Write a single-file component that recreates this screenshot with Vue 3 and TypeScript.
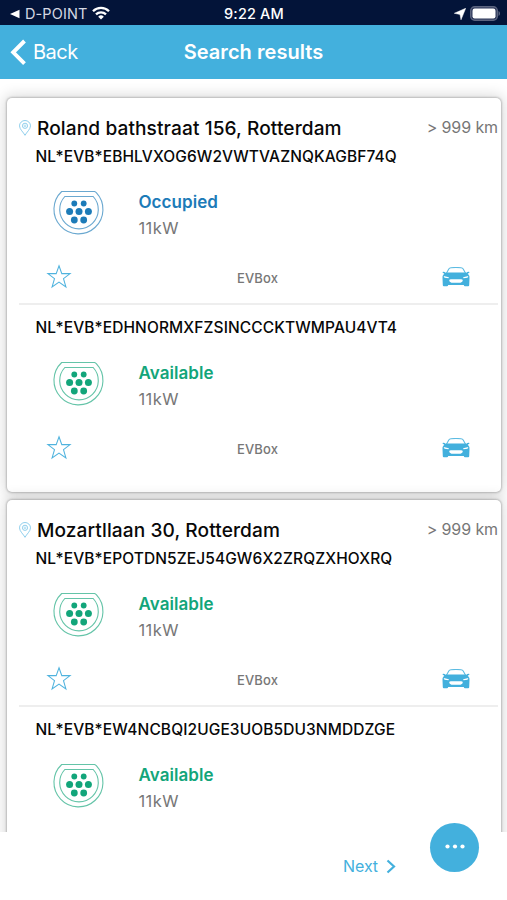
<script setup lang="ts">
interface Connector {
  id: string
  status: 'Occupied' | 'Available'
  power: string
  operator?: string
}

interface Location {
  address: string
  distance: string
  connectors: Connector[]
}

const locations: Location[] = [
  {
    address: 'Roland bathstraat 156, Rotterdam',
    distance: '> 999 km',
    connectors: [
      { id: 'NL*EVB*EBHLVXOG6W2VWTVAZNQKAGBF74Q', status: 'Occupied', power: '11kW', operator: 'EVBox' },
      { id: 'NL*EVB*EDHNORMXFZSINCCCKTWMPAU4VT4', status: 'Available', power: '11kW', operator: 'EVBox' },
    ],
  },
  {
    address: 'Mozartllaan 30, Rotterdam',
    distance: '> 999 km',
    connectors: [
      { id: 'NL*EVB*EPOTDN5ZEJ54GW6X2ZRQZXHOXRQ', status: 'Available', power: '11kW', operator: 'EVBox' },
      { id: 'NL*EVB*EW4NCBQI2UGE3UOB5DU3NMDDZGE', status: 'Available', power: '11kW' },
    ],
  },
]
</script>

<template>
  <div class="screen">
    <div class="statusbar">
      <div class="status-left">
        <svg class="return" width="10" height="10" viewBox="0 0 10 10"><path d="M0 5 9.5 .8v8.4z" fill="#fff" /></svg>
        <span class="carrier">D-POINT</span>
        <svg class="wifi" width="18" height="14" viewBox="0 0 18 14">
          <g fill="none" stroke="#fff" stroke-width="2.3">
            <path d="M1 5.2a11.3 11.3 0 0 1 16 0" />
            <path d="M4 8.4a7.1 7.1 0 0 1 10 0" />
          </g>
          <path d="M6.2 10.7a4 4 0 0 1 5.6 0L9 13.5z" fill="#fff" />
        </svg>
      </div>
      <span class="clock">9:22 AM</span>
      <div class="status-right">
        <svg width="12" height="12" viewBox="0 0 12 12"><path d="M11.7.3 7 11.8 6 6.4.3 5.3z" fill="#fff" stroke="#fff" stroke-width=".5" stroke-linejoin="round" /></svg>
        <svg width="31" height="15" viewBox="0 0 31 15">
          <rect x=".7" y=".7" width="26.6" height="13.6" rx="4" fill="#2b3658" stroke="#5c6580" stroke-width="1.4" />
          <rect x="2.5" y="2.5" width="23" height="10" rx="2.2" fill="#fff" />
          <path d="M28.5 5c2 .7 2 4.3 0 5z" fill="#5c6580" />
        </svg>
      </div>
    </div>

    <header class="navbar">
      <button class="back">
        <svg width="17" height="27" viewBox="0 0 17 27"><path d="M14.5 2 3.2 13.3 14.5 24.6" fill="none" stroke="#fff" stroke-width="3.9" /></svg>
        <span>Back</span>
      </button>
      <h1>Search results</h1>
      <span></span>
    </header>

    <main class="results">
      <article v-for="location in locations" :key="location.address" class="card">
        <div class="location">
          <svg class="pin" width="12" height="16" viewBox="0 0 12 16" fill="none" stroke="#83caea" stroke-width=".9">
            <path d="M6 15.3C4.6 12.5.5 9.2.5 5.9a5.5 5.4 0 0 1 11 0C11.5 9.2 7.4 12.5 6 15.3z" />
            <circle cx="6" cy="5.8" r="2.6" />
            <circle cx="6" cy="5.8" r=".9" stroke-width=".6" />
          </svg>
          <h2>{{ location.address }}</h2>
          <span class="distance">{{ location.distance }}</span>
        </div>

        <section v-for="connector in location.connectors" :key="connector.id" class="connector">
          <div class="code">{{ connector.id }}</div>
          <div class="details" :class="connector.status.toLowerCase()">
            <svg class="plug" width="52" height="46" viewBox="0 0 52 46">
              <g fill="none" stroke="currentColor" stroke-width="1.1" opacity=".65">
                <path d="M8.7 1.5H41.8L43.3 2.6A24.5 24.5 0 1 1 8.7 1.5Z" />
                <path d="M11.8 6.5H40.2A19.3 19.3 0 1 1 11.8 6.5Z" />
              </g>
              <g fill="currentColor">
                <circle cx="21.3" cy="13.5" r="2.9" />
                <circle cx="30.7" cy="13.5" r="2.9" />
                <circle cx="16.6" cy="21.5" r="3.5" />
                <circle cx="26" cy="21.5" r="3.5" />
                <circle cx="35.4" cy="21.5" r="3.5" />
                <circle cx="21.3" cy="30" r="3.4" />
                <circle cx="30.7" cy="30" r="3.4" />
              </g>
            </svg>
            <div>
              <div class="state">{{ connector.status }}</div>
              <div class="power">{{ connector.power }}</div>
            </div>
          </div>
          <div v-if="connector.operator" class="actions">
            <svg class="star" width="26" height="25" viewBox="0 0 26 25">
              <path d="M13 1.8 15.8 9.6H24.1L17.5 14.7 19.9 22.9 13 18.1 6.1 22.9 8.5 14.7 1.9 9.6H10.2Z" fill="none" stroke="#4fb3de" stroke-width="1.05" />
            </svg>
            <span class="operator">{{ connector.operator }}</span>
            <svg class="car" width="28" height="20" viewBox="0 0 28 20">
              <path d="M4.3 6.5 6.8 2.1Q7.4 1 9 .8 14 .2 19 .8q1.6.2 2.2 1.3L23.7 6.5" fill="none" stroke="#5bbbe2" stroke-width="1.1" />
              <path d="M.5 5.1Q2 4.3 3.7 5.7L5 5.5H23L24.3 5.7Q26 4.3 27.5 5.1 27.5 6.3 25.7 6.6 27.6 8.5 27.5 11L27.2 18.2q-.1 1-1 1H23q-1 0-1.2-1.2H6.2Q6 19.2 5 19.2H1.8q-.9 0-1-1L.5 11Q.4 8.5 2.3 6.6.5 6.3.5 5.1Z" fill="#43b0dd" />
              <path d="M1.6 9 6.9 10.3 6.5 11.2 2.5 10.7zM26.4 9 21.1 10.3 21.5 11.2 25.5 10.7zM9 12.2h10q1.8 0 1.8 1.4t-2.3 2.2H9.5q-2.3-.8-2.3-2.2T9 12.2" fill="#fff" />
            </svg>
          </div>
        </section>
      </article>
    </main>

    <footer class="pager">
      <a class="next">
        <span>Next</span>
        <svg width="10" height="15" viewBox="0 0 10 15"><path d="M1.5 1.5 8 7.5 1.5 13.5" fill="none" stroke="#43b0dd" stroke-width="2.2" /></svg>
      </a>
      <button class="more">
        <svg width="20" height="5" viewBox="0 0 20 5" fill="#fff"><circle cx="2.5" cy="2.5" r="2.1" /><circle cx="10" cy="2.5" r="2.1" /><circle cx="17.5" cy="2.5" r="2.1" /></svg>
      </button>
    </footer>
  </div>
</template>

<style>
body { margin: 0; background: #fff; }
</style>

<style scoped>
* { box-sizing: border-box; }
.screen {
  display: flex;
  flex-direction: column;
  width: 507px;
  height: 900px;
  overflow: hidden;
  background: #fff;
  color: #080808;
  font-family: Inter, "Liberation Sans", sans-serif;
}
svg { display: block; flex: none; }
button { border: 0; padding: 0; background: none; font: inherit; color: inherit; }
h1, h2 { margin: 0; }
.statusbar, .navbar {
  display: grid;
  grid-template-columns: 1fr auto 1fr;
  align-items: center;
  flex: none;
  color: #fff;
}
.statusbar { height: 25px; padding: 2px 6px 0 10px; background: #031439; }
.status-left { display: flex; align-items: center; }
.carrier { margin-left: 5px; font-size: 14.5px; letter-spacing: .1px; color: #d5d9e3; white-space: nowrap; }
.wifi { margin-left: 5px; margin-top: -2px; }
.clock { font-size: 14.5px; font-weight: 500; letter-spacing: .15px; margin-left: -3px; }
.status-right { display: flex; justify-content: flex-end; align-items: center; gap: 4px; }
.navbar { height: 54px; padding: 0 10px; background: #43b0dd; }
.back { display: flex; align-items: center; gap: 6px; font-size: 20px; letter-spacing: -.5px; font-weight: 400; }
.navbar h1 { font-size: 20px; font-weight: 600; letter-spacing: .05px; }
.results {
  display: flex;
  flex-direction: column;
  gap: 8px;
  height: 753px;
  flex: none;
  padding: 19px 6px 0 7px;
  overflow: hidden;
}
.card {
  flex: none;
  height: 394px;
  border-radius: 5px;
  background: #fff;
  box-shadow: 0 0 2px 1px rgba(0, 0, 0, .2), 0 0 14px 3px rgba(0, 0, 0, .14);
}
.location { display: flex; align-items: center; height: 47px; padding: 14px 3px 0 12px; }
.pin { margin-top: -2px; }
.location h2 { margin: -2px 0 0 6px; font-size: 19.1px; font-weight: 500; letter-spacing: .1px; white-space: nowrap; }
.distance { margin: -3px 0 0 auto; font-size: 16px; letter-spacing: -.1px; color: #777; white-space: nowrap; }
.connector + .connector::before {
  content: "";
  display: block;
  height: 2px;
  margin: 0 3px 11px 12px;
  background: #eee;
}
.code { height: 24px; padding-left: 28.5px; font-size: 15.5px; font-weight: 500; letter-spacing: .1px; line-height: 24px; white-space: nowrap; }
.details { display: flex; height: 86px; padding: 19px 0 0 46px; }
.plug { margin-top: 2px; }
.state { margin-left: 33.5px; padding-top: 1px; font-size: 17px; line-height: 26px; font-weight: 600; letter-spacing: .05px; }
.power { margin-left: 33.5px; font-size: 16.5px; line-height: 27px; letter-spacing: .4px; color: #777; }
.occupied { color: #1c7bb8; }
.available { color: #12a57a; }
.actions { display: grid; grid-template-columns: 1fr auto 1fr; align-items: center; height: 48px; padding: 0 31px 5px 39px; }
.operator { margin: 2px 0 0 -1px; font-size: 13px; font-weight: 500; letter-spacing: .15px; color: #777; }
.car { justify-self: end; margin-top: 1px; }
.pager { display: flex; justify-content: flex-end; height: 68px; padding-right: 28px; gap: 34px; }
.next { display: flex; align-items: center; gap: 8px; font-size: 16px; letter-spacing: -.1px; color: #43b0dd; }
.more {
  display: flex;
  align-items: center;
  justify-content: center;
  width: 49px;
  height: 49px;
  margin-top: -9px;
  padding-bottom: 2px;
  border-radius: 50%;
  background: #43b0dd;
  z-index: 1;
}
</style>
